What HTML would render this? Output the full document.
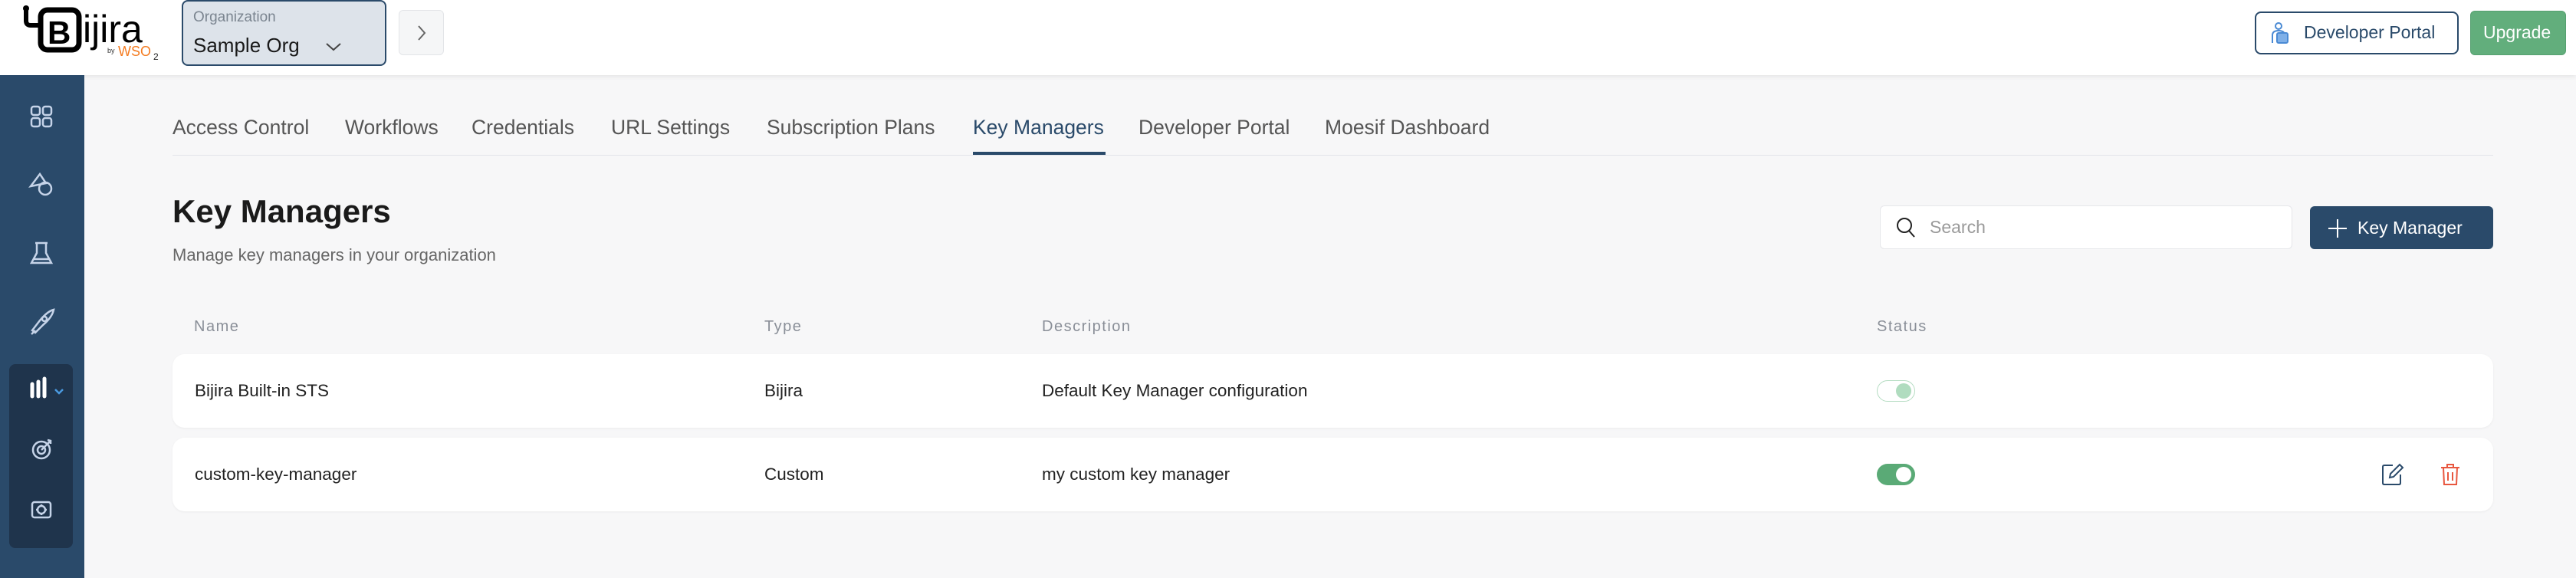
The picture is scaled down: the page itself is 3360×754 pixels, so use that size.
<!DOCTYPE html>
<html><head><meta charset="utf-8"><style>
*{margin:0;padding:0;box-sizing:border-box}
body{width:3360px;height:754px;overflow:hidden;background:#f7f7f8;font-family:"Liberation Sans",sans-serif;position:relative}
.a{position:absolute;white-space:nowrap}
.hdr{left:0;top:0;width:3360px;height:98px;background:#fff;box-shadow:0 2px 6px rgba(0,0,0,.08)}
.side{left:0;top:98px;width:110px;height:656px;background:#2a4a6a}
.tab{top:151px;font-size:26.5px;color:#555}
.th{top:415px;font-size:20px;color:#8a8f98;letter-spacing:1.5px}
.row{left:225px;width:3027px;height:96px;background:#fff;border-radius:16px;box-shadow:0 1px 3px rgba(0,0,0,.05)}
.td{font-size:22.5px;color:#222}
</style></head><body>
<div class="a hdr"></div>
<svg class="a" style="left:28px;top:5px" width="190" height="75" viewBox="0 0 190 75">
<path d="M6 8 V22 Q6 28 12 28 H24" fill="none" stroke="#000" stroke-width="6"/>
<circle cx="6" cy="6" r="4" fill="#000"/>
<rect x="25" y="8" width="50" height="52" rx="9" fill="none" stroke="#000" stroke-width="7"/>
<text x="34" y="52" font-family="Liberation Sans" font-weight="bold" font-size="42">B</text>
<text x="80" y="50" font-family="Liberation Sans" font-size="50">ijira</text>
<text x="112" y="64" font-size="9" fill="#333">by</text>
<text x="126" y="68" font-size="18" fill="#f47b20">WSO</text><text x="172" y="73" font-size="12" fill="#222">2</text>
</svg>
<div class="a" style="left:237px;top:0;width:267px;height:86px;background:#dde3ea;border:2px solid #2a4a6a;border-radius:8px"></div>
<div class="a" style="left:252px;top:12px;font-size:19px;color:#7b8590">Organization</div>
<div class="a" style="left:252px;top:44px;font-size:26px;color:#1a1a1a">Sample Org</div>
<svg class="a" style="left:424px;top:55px" width="22" height="12"><path d="M2 2 L11 10 L20 2" fill="none" stroke="#444" stroke-width="2"/></svg>
<div class="a" style="left:520px;top:13px;width:59px;height:59px;background:#f5f6f7;border:1px solid #e3e5e8;border-radius:6px"></div>
<svg class="a" style="left:544px;top:32px" width="12" height="22"><path d="M2 2 L10 11 L2 20" fill="none" stroke="#666" stroke-width="2"/></svg>
<div class="a" style="left:2941px;top:15px;width:266px;height:56px;border:2px solid #2a4a6a;border-radius:8px;background:#fff"></div>
<svg class="a" style="left:2960px;top:28px" width="28" height="30" viewBox="0 0 28 30"><circle cx="12" cy="6" r="4" fill="none" stroke="#4a8ad4" stroke-width="2"/><path d="M4 28 V18 Q4 12 12 12 Q20 12 20 18" fill="none" stroke="#4a8ad4" stroke-width="2"/><rect x="10" y="15" width="14" height="13" rx="2" fill="#7fb0e8" stroke="#4a8ad4" stroke-width="2"/></svg>
<div class="a" style="left:3005px;top:29px;font-size:23px;color:#2a4a6a">Developer Portal</div>
<div class="a" style="left:3222px;top:14px;width:125px;height:58px;background:#62ae7c;border-radius:6px;border:1px solid #56a070"></div>
<div class="a" style="left:3239px;top:29px;font-size:23px;color:#fff">Upgrade</div>

<div class="a side"></div>
<div class="a" style="left:12px;top:475px;width:83px;height:240px;background:#1f344c;border-radius:8px"></div>
<svg class="a" style="left:0;top:98px" width="110" height="656" fill="none" stroke="#c5d3e8" stroke-width="2.5">
<rect x="41" y="41" width="11" height="11" rx="3"/><rect x="56" y="41" width="11" height="11" rx="3"/><rect x="41" y="56" width="11" height="11" rx="3"/><rect x="56" y="56" width="11" height="11" rx="3"/>
<path d="M40 145 L52 129 L60 141 Z"/><circle cx="59" cy="148" r="8"/>
<path d="M48 219 V232 L41 245 H67 L60 232 V219 M46 219 H62 M43 240 H65"/>
<path d="M42 333 L52 320 Q62 308 70 306 Q68 316 56 326 L46 336 Z"/><circle cx="58" cy="318" r="3"/><path d="M41 338 L46 333"/>
<path d="M42 403 V419 M50 400 V419 M58 396 V419" stroke="#fff" stroke-width="5" stroke-linecap="round"/>
<path d="M72 410 L77 415 L82 410" stroke="#4a9ae0"/>
<circle cx="54" cy="489" r="11"/><circle cx="54" cy="489" r="5"/><path d="M54 489 L66 477 M62 476 L66 477 L66 481"/>
<rect x="42" y="557" width="24" height="20" rx="3"/><circle cx="54" cy="567" r="5"/><path d="M54 560 V562 M54 572 V574 M47 567 H49 M59 567 H61"/>
</svg>

<div class="a tab" style="left:225px">Access Control</div>
<div class="a tab" style="left:450px">Workflows</div>
<div class="a tab" style="left:615px">Credentials</div>
<div class="a tab" style="left:797px">URL Settings</div>
<div class="a tab" style="left:1000px">Subscription Plans</div>
<div class="a tab" style="left:1269px;color:#2a4a6a">Key Managers</div>
<div class="a tab" style="left:1485px">Developer Portal</div>
<div class="a tab" style="left:1728px">Moesif Dashboard</div>
<div class="a" style="left:225px;top:202px;width:3027px;height:1px;background:#e3e5ea"></div>
<div class="a" style="left:1269px;top:198px;width:173px;height:4px;background:#2a4a6a"></div>

<div class="a" style="left:225px;top:252px;font-size:42px;font-weight:bold;color:#1a1a1a">Key Managers</div>
<div class="a" style="left:225px;top:320px;font-size:22px;color:#666">Manage key managers in your organization</div>

<div class="a" style="left:2452px;top:268px;width:538px;height:57px;background:#fff;border:1px solid #e6e7ea;border-radius:6px"></div>
<svg class="a" style="left:2472px;top:282px" width="30" height="30"><circle cx="12" cy="12" r="9" fill="none" stroke="#222" stroke-width="2"/><path d="M18 19 L25 27" stroke="#222" stroke-width="2"/></svg>
<div class="a" style="left:2517px;top:283px;font-size:23px;color:#9a9a9a">Search</div>
<div class="a" style="left:3013px;top:269px;width:239px;height:56px;background:#2a4a6a;border-radius:6px"></div>
<svg class="a" style="left:3036px;top:285px" width="26" height="26"><path d="M13 1 V25 M1 13 H25" stroke="#fff" stroke-width="2"/></svg>
<div class="a" style="left:3075px;top:284px;font-size:23px;color:#fff">Key Manager</div>

<div class="a th" style="left:253px">Name</div>
<div class="a th" style="left:997px">Type</div>
<div class="a th" style="left:1359px">Description</div>
<div class="a th" style="left:2448px">Status</div>

<div class="a row" style="top:462px"></div>
<div class="a row" style="top:571px"></div>
<div class="a td" style="left:254px;top:497px">Bijira Built-in STS</div>
<div class="a td" style="left:997px;top:497px">Bijira</div>
<div class="a td" style="left:1359px;top:497px">Default Key Manager configuration</div>
<div class="a" style="left:2448px;top:496px;width:50px;height:28px;border:1.5px solid #b5dcc2;border-radius:14px;background:#fff"></div>
<div class="a" style="left:2473px;top:500px;width:20px;height:20px;border-radius:10px;background:#b0dcbf"></div>
<div class="a td" style="left:254px;top:606px">custom-key-manager</div>
<div class="a td" style="left:997px;top:606px">Custom</div>
<div class="a td" style="left:1359px;top:606px">my custom key manager</div>
<div class="a" style="left:2448px;top:605px;width:50px;height:28px;border-radius:14px;background:#5aaa76"></div>
<div class="a" style="left:2473px;top:609px;width:20px;height:20px;border-radius:10px;background:#fff"></div>
<svg class="a" style="left:3105px;top:603px" width="32" height="32" fill="none" stroke="#2a4a6a" stroke-width="2"><path d="M16 4 H5 Q3 4 3 6 V27 Q3 29 5 29 H24 Q26 29 26 27 V16"/><path d="M12 20 L13 15 L25 3 L29 7 L17 19 Z"/></svg>
<svg class="a" style="left:3180px;top:603px" width="32" height="32" fill="none" stroke="#e8573f" stroke-width="2"><path d="M4 7 H28 M12 7 V3 H20 V7 M7 7 L8 29 H24 L25 7 M13 13 V24 M19 13 V24"/></svg>
</body></html>
